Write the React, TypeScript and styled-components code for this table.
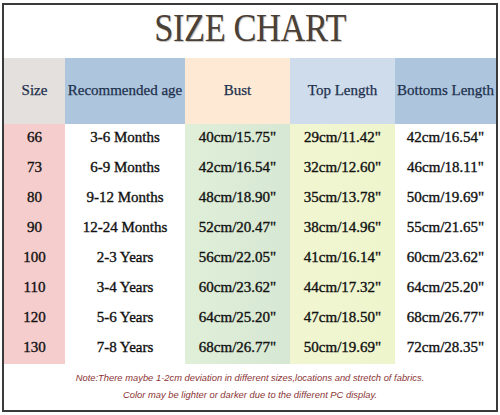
import styled, { createGlobalStyle } from 'styled-components';

const GlobalStyle = createGlobalStyle`
  html, body {
    margin: 0;
    padding: 0;
    background: #ffffff;
  }
  body {
    font-family: 'Liberation Serif', serif;
  }
`;

const Sheet = styled.div`
  margin: 3px 0 0 2px;
  width: 496px;
  height: 409px;
  box-sizing: border-box;
  border: 2px solid #3a3a3a;
  display: flex;
  flex-direction: column;
  background: #ffffff;
`;

const TitleRow = styled.div`
  height: 53px;
  box-sizing: border-box;
  padding-bottom: 9px;
  display: flex;
  align-items: center;
  justify-content: center;
`;

const Title = styled.h1`
  margin: 0;
  display: inline-block;
  font-family: 'Liberation Serif', serif;
  font-weight: normal;
  font-size: 41px;
  line-height: 1;
  color: #4a4036;
  text-shadow: 1px 1px 1px rgba(0, 0, 0, 0.25);
  transform: scaleX(0.84);
  letter-spacing: -0.5px;
`;

const Grid = styled.div`
  display: grid;
  grid-template-columns: 61px 120px 105px 105px 1fr;
  grid-template-rows: 66px repeat(8, 30px);
`;

const HeadCell = styled.div<{ $bg: string }>`
  background: ${(p) => p.$bg};
  display: flex;
  align-items: center;
  justify-content: center;
  font-size: 15px;
  color: #1d2f4c;
  -webkit-text-stroke: 0.25px #1d2f4c;
  white-space: nowrap;
  padding-bottom: 2px;
`;

const Cell = styled.div<{ $bg: string }>`
  background: ${(p) => p.$bg};
  display: flex;
  align-items: center;
  justify-content: center;
  font-size: 15px;
  color: #111111;
  -webkit-text-stroke: 0.35px #111111;
  white-space: nowrap;
  padding-bottom: 3px;
  box-sizing: border-box;
`;

const Notes = styled.div`
  flex: 1;
  display: flex;
  flex-direction: column;
  align-items: center;
  justify-content: center;
  gap: 6px;
  padding-bottom: 2px;
  font-family: 'Liberation Sans', sans-serif;
  font-style: italic;
  font-size: 9.4px;
  color: #8a3434;
`;

const NoteLine = styled.div`
  white-space: nowrap;
`;

const headers: { label: string; bg: string }[] = [
  { label: 'Size', bg: '#e3e0dd' },
  { label: 'Recommended age', bg: '#adc6dd' },
  { label: 'Bust', bg: '#fde9d4' },
  { label: 'Top Length', bg: '#cfdceb' },
  { label: 'Bottoms Length', bg: '#adc6dd' },
];

const columnBg = [
  '#f5cdcc',
  '#ffffff',
  'linear-gradient(90deg, #e0efd8, #d6e7d3)',
  'linear-gradient(90deg, #f1f6d0, #eef5cd)',
  '#ffffff',
];

const rows: string[][] = [
  ['66', '3-6 Months', '40cm/15.75"', '29cm/11.42"', '42cm/16.54"'],
  ['73', '6-9 Months', '42cm/16.54"', '32cm/12.60"', '46cm/18.11"'],
  ['80', '9-12 Months', '48cm/18.90"', '35cm/13.78"', '50cm/19.69"'],
  ['90', '12-24 Months', '52cm/20.47"', '38cm/14.96"', '55cm/21.65"'],
  ['100', '2-3 Years', '56cm/22.05"', '41cm/16.14"', '60cm/23.62"'],
  ['110', '3-4 Years', '60cm/23.62"', '44cm/17.32"', '64cm/25.20"'],
  ['120', '5-6 Years', '64cm/25.20"', '47cm/18.50"', '68cm/26.77"'],
  ['130', '7-8 Years', '68cm/26.77"', '50cm/19.69"', '72cm/28.35"'],
];

const App = () => {
  return (
    <>
      <GlobalStyle />
      <Sheet>
        <TitleRow>
          <Title>SIZE CHART</Title>
        </TitleRow>
        <Grid>
          {headers.map((h) => (
            <HeadCell key={h.label} $bg={h.bg}>
              {h.label}
            </HeadCell>
          ))}
          {rows.map((row) =>
            row.map((value, i) => (
              <Cell key={row[0] + '-' + i} $bg={columnBg[i]}>
                {value}
              </Cell>
            ))
          )}
        </Grid>
        <Notes>
          <NoteLine>
            Note:There maybe 1-2cm deviation in different sizes,locations and stretch of fabrics.
          </NoteLine>
          <NoteLine>Color may be lighter or darker due to the different PC display.</NoteLine>
        </Notes>
      </Sheet>
    </>
  );
};

export default App;
